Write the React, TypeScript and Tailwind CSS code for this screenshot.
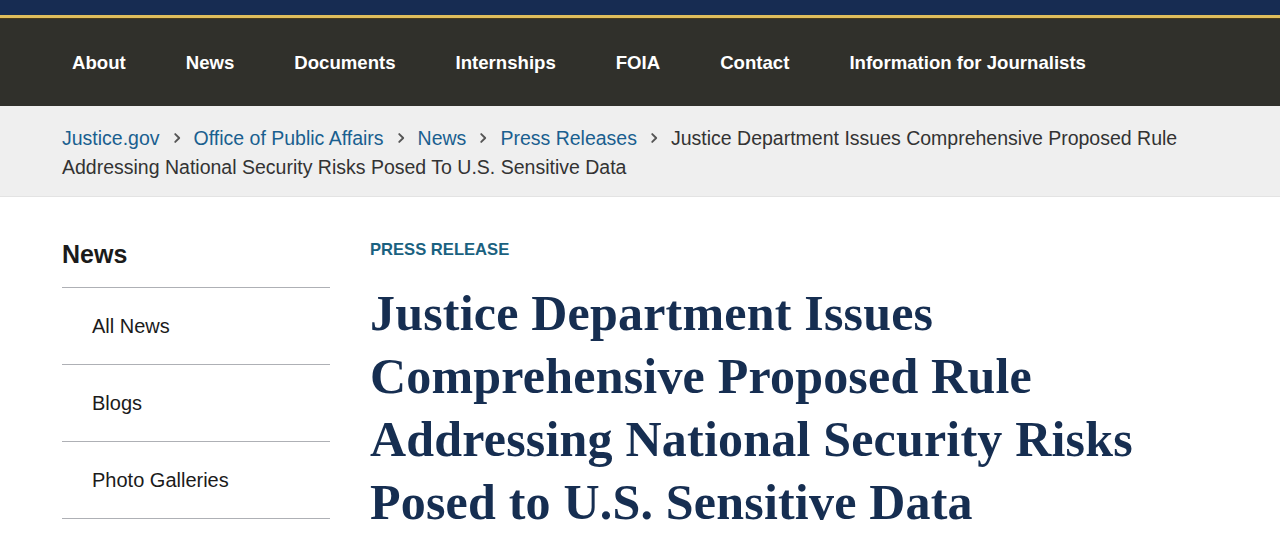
import * as React from 'react';

const navItems = ['About', 'News', 'Documents', 'Internships', 'FOIA', 'Contact', 'Information for Journalists'];

const crumbs = ['Justice.gov', 'Office of Public Affairs', 'News', 'Press Releases'];

const currentPage = 'Justice Department Issues Comprehensive Proposed Rule Addressing National Security Risks Posed To U.S. Sensitive Data';

const sideLinks = ['All News', 'Blogs', 'Photo Galleries'];

const Chevron = () => (
  <svg viewBox="0 0 16 16" className="inline-block w-[14px] h-[14px] mx-[10px] -mt-[3px] text-[#555555]" fill="none" stroke="currentColor" strokeWidth={2.2} strokeLinecap="round" strokeLinejoin="round">
    <path d="M6 3.5 10.5 8 6 12.5" />
  </svg>
);

const App: React.FC = () => {
  return (
    <div className="min-h-screen bg-white font-['Liberation_Sans',Arial,sans-serif]">
      {/* top banner */}
      <div className="h-[15px] bg-[#172c52]"></div>
      <div className="h-[3px] bg-[#dfbd5c]"></div>
      <div className="h-[1px] bg-[#4a3a1a]"></div>

      {/* main nav */}
      <nav className="h-[87px] bg-[#30302b] flex items-center pl-[72px] pt-[2px] gap-[60px]">
        {navItems.map((item) => (
          <a key={item} href="#" className="text-white text-[18.6px] font-bold leading-none">
            {item}
          </a>
        ))}
      </nav>

      {/* breadcrumb */}
      <div className="bg-[#efefef] border-b border-[#e3e3e3] px-[62px] pt-[18px] pb-[14px]">
        <p className="text-[19.5px] leading-[29px] text-[#333333] max-w-[1150px]">
          {crumbs.map((c) => (
            <React.Fragment key={c}>
              <a href="#" className="text-[#1a5f8f]">{c}</a>
              <Chevron />
            </React.Fragment>
          ))}
          {currentPage.split(' ').map((w, i) => (
            <span key={i}>{w} </span>
          ))}
        </p>
      </div>

      {/* body */}
      <div className="flex gap-[40px] px-[62px] pt-[41px]">
        <aside className="w-[268px] shrink-0">
          <h2 className="text-[25px] font-bold text-[#1b1b1b] leading-[32px] pb-[17px] border-b border-[#aeb0b5]">News</h2>
          <ul>
            {sideLinks.map((l) => (
              <li key={l} className="border-b border-[#aeb0b5] h-[77px] flex items-center pl-[30px]">
                <a href="#" className="text-[20px] text-[#1b1b1b]">{l}</a>
              </li>
            ))}
          </ul>
        </aside>

        <main className="flex-1">
          <div className="text-[16.6px] font-bold text-[#1a6180] leading-[24px]">PRESS RELEASE</div>
          <h1 className="mt-[20px] text-[50px] leading-[63px] tracking-[0.2px] font-bold text-[#162e51] font-['Liberation_Serif','Times_New_Roman',serif] max-w-[840px]">
            Justice Department Issues Comprehensive Proposed Rule Addressing National Security Risks Posed to U.S. Sensitive Data
          </h1>
        </main>
      </div>
    </div>
  );
};

export default App;
